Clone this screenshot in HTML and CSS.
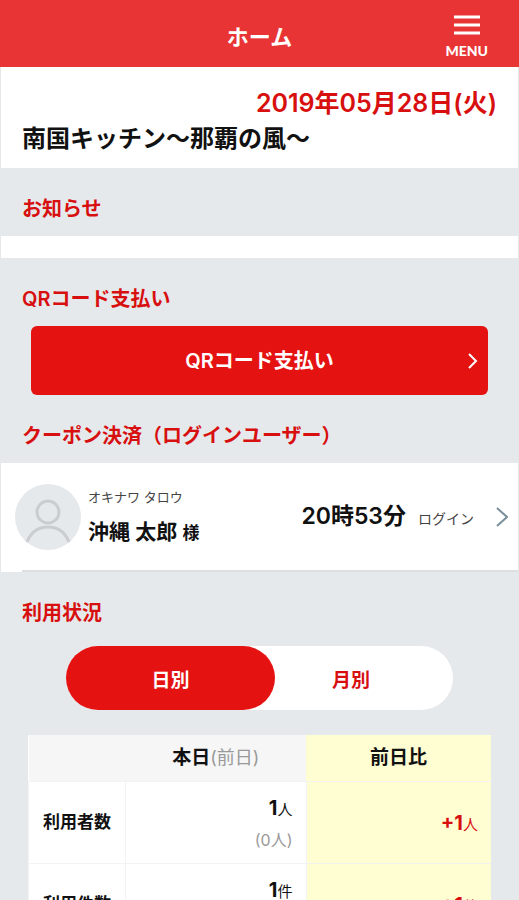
FILE: index.html
```html
<!DOCTYPE html>
<html lang="ja">
<head>
    <meta charset="UTF-8">
    <meta name="viewport" content="width=device-width, initial-scale=1.0">
    <title>ホーム</title>
    <link rel="stylesheet" href="styles.css">
</head>
<body>
    <header class="header">
        <h1 class="header-title">ホーム</h1>
        <button type="button" class="menu-button">
            <svg class="menu-icon" viewBox="0 0 26 20" aria-hidden="true">
                <path d="M0 2h26M0 10h26M0 18h26"/>
            </svg>
            <span>MENU</span>
        </button>
    </header>

    <main class="main">
        <!-- 店舗情報 -->
        <div class="shop">
            <p class="shop-date">2019年05月28日(火)</p>
            <p class="shop-name">南国キッチン〜那覇の風〜</p>
        </div>

        <!-- お知らせ -->
        <section>
            <h2 class="section-title">お知らせ</h2>
            <div class="news-list"></div>
        </section>

        <!-- QRコード支払い -->
        <section>
            <h2 class="section-title">QRコード支払い</h2>
            <a href="#" class="qr-button">
                <span>QRコード支払い</span>
                <svg class="qr-arrow" viewBox="0 0 10 16" aria-hidden="true">
                    <path d="M1 1l7 7-7 7"/>
                </svg>
            </a>
        </section>

        <!-- クーポン決済 -->
        <section>
            <h2 class="section-title">クーポン決済（ログインユーザー）</h2>
            <div class="user-list">
                <a href="#" class="user">
                    <svg class="user-icon" viewBox="0 0 66 66" aria-hidden="true">
                        <circle class="user-icon-bg" cx="33" cy="33" r="33"/>
                        <circle cx="33" cy="28" r="11"/>
                        <path d="M12 58c4-10 12-15 21-15s17 5 21 15"/>
                    </svg>
                    <span class="user-name">
                        <span class="user-kana">オキナワ タロウ</span>
                        <span class="user-kanji">沖縄 太郎 <small>様</small></span>
                    </span>
                    <span class="user-login"><b>20時53分</b><small>ログイン</small></span>
                    <svg class="user-arrow" viewBox="0 0 12 20" aria-hidden="true">
                        <path d="M1 1l10 9-10 9"/>
                    </svg>
                </a>
            </div>
        </section>

        <!-- 利用状況 -->
        <section>
            <h2 class="section-title status-title">利用状況</h2>
            <div class="tabs">
                <button type="button" class="tab is-active" aria-pressed="true">日別</button>
                <button type="button" class="tab" aria-pressed="false">月別</button>
            </div>
            <div class="table-wrap">
                <table class="status-table">
                    <thead>
                        <tr>
                            <td class="col-label"></td>
                            <th scope="col" class="col-today">本日<span class="prev">(前日)</span></th>
                            <th scope="col" class="col-diff diff">前日比</th>
                        </tr>
                    </thead>
                    <tbody>
                        <tr>
                            <th scope="row">利用者数</th>
                            <td><p class="num">1<small>人</small></p><p class="prev">(0人)</p></td>
                            <td class="diff"><p class="num">+1<small>人</small></p></td>
                        </tr>
                        <tr>
                            <th scope="row">利用件数</th>
                            <td><p class="num">1<small>件</small></p><p class="prev">(0件)</p></td>
                            <td class="diff"><p class="num">+1<small>件</small></p></td>
                        </tr>
                    </tbody>
                </table>
            </div>
        </section>
    </main>
</body>
</html>
```
FILE: styles.css
```css
* {
    box-sizing: border-box;
}

body {
    margin: 0;
    background: #e5e9ec;
    color: #111;
    font-family: Inter, "Noto Sans CJK JP", sans-serif;
    font-size: 20px;
    line-height: 30px;
}

h1, h2, p {
    margin: 0;
}

a {
    color: inherit;
    text-decoration: none;
}

button {
    border: 0;
    padding: 0;
    background: none;
    font-family: inherit;
    cursor: pointer;
}

svg {
    fill: none;
    flex-shrink: 0;
}

/* ヘッダー */
.header {
    display: grid;
    grid-template-columns: 1fr auto 1fr;
    align-items: center;
    height: 67px;
    padding: 0 31px;
    background: #e83434;
    color: #fff;
}

.header-title {
    grid-column: 2;
    padding-top: 6px;
    font-size: 22px;
    font-weight: 600;
}

.menu-button {
    display: flex;
    flex-direction: column;
    align-items: center;
    justify-self: end;
    gap: 8px;
    padding-top: 6px;
    color: #fff;
    font-family: Lato, sans-serif;
    font-size: 14px;
    font-weight: 900;
    line-height: 16px;
}

.menu-icon {
    width: 26px;
    height: 20px;
    stroke: #fff;
    stroke-width: 3;
}

.main {
    border: solid #e5e9ec;
    border-width: 0 1px;
}

/* 店舗情報 */
.shop {
    padding: 19px 21px 12px;
    background: #fff;
    font-size: 24px;
    font-weight: 600;
    line-height: 35px;
}

.shop-date {
    color: #d80f0f;
    font-size: 25px;
    text-align: right;
}

.section-title {
    padding: 26px 21px 12px;
    color: #d80f0f;
    font-size: 20px;
    font-weight: 600;
}

.news-list {
    min-height: 22px;
    background: #fff;
}

/* QRコード支払い */
.qr-button {
    display: flex;
    align-items: center;
    justify-content: center;
    position: relative;
    height: 69px;
    margin: 0 30px;
    border-radius: 6px;
    background: #e51212;
    color: #fff;
    font-weight: 600;
}

.qr-arrow {
    position: absolute;
    right: 10px;
    width: 10px;
    height: 16px;
    stroke: #fff;
    stroke-width: 2;
}

/* ログインユーザー */
.user-list {
    background: #fff;
}

.user-list::after {
    content: "";
    display: block;
    height: 2px;
    margin-left: 21px;
    background: #dce0e2;
}

.user {
    display: flex;
    align-items: center;
    padding: 21px 10px 20px 14px;
}

.user-icon {
    width: 66px;
    height: 66px;
    margin-right: 7px;
    stroke: #c9cdcf;
    stroke-width: 3;
}

.user-icon-bg {
    fill: #e5e9ec;
    stroke: none;
}

.user-name {
    display: flex;
    flex-direction: column;
    gap: 10px;
}

.user-kana {
    color: #444;
    font-size: 13px;
    line-height: 20px;
}

.user-kanji {
    font-size: 21px;
    font-weight: 600;
}

.user-kanji small {
    font-size: 17px;
}

.user-login {
    display: flex;
    align-items: baseline;
    gap: 12px;
    margin-left: auto;
}

.user-login b {
    font-size: 23px;
    font-weight: 600;
}

.user-login small {
    color: #444;
    font-size: 14px;
}

.user-arrow {
    width: 12px;
    height: 20px;
    margin-left: 22px;
    stroke: #78909a;
    stroke-width: 2;
}

/* 利用状況 */
.status-title {
    padding-bottom: 18px;
}

.tabs {
    display: flex;
    margin: 0 65px;
    border-radius: 32px;
    background: #fff;
}

.tab {
    flex: 1;
    height: 64px;
    border-radius: 32px;
    color: #d80f0f;
    font-size: 19px;
    font-weight: 600;
}

.tab.is-active {
    flex: 0 0 54%;
    background: #e51212;
    color: #fff;
}

.tab:not(.is-active) {
    padding-right: 26px;
}

.table-wrap {
    padding: 25px 27px;
}

.status-table {
    width: 100%;
    table-layout: fixed;
    border-collapse: collapse;
    background: #fff;
}

.status-table thead {
    background: #f6f6f6;
    font-size: 19px;
}

.status-table thead th,
.status-table thead td {
    height: 46px;
    padding: 0;
}

.status-table th {
    font-weight: 600;
}

.col-label {
    width: 21%;
}

.col-today {
    width: 39%;
}

.col-diff {
    width: 40%;
}

.status-table tbody th,
.status-table tbody td {
    height: 82px;
    padding: 4px 13px 0;
    border: 1px solid #f3f3f3;
    border-width: 1px 0 1px 1px;
    text-align: right;
}

.status-table tbody th {
    padding: 0;
    font-size: 17px;
    text-align: center;
}

.status-table .prev {
    color: #999;
    font-size: 16px;
    font-weight: 400;
}

.status-table thead .prev {
    font-size: 18px;
}

.status-table .diff {
    background: #fffdd2;
}

.num {
    font-weight: 700;
}

.num small {
    font-size: 15px;
    font-weight: 400;
}

.diff .num {
    color: #d80f0f;
}
```
